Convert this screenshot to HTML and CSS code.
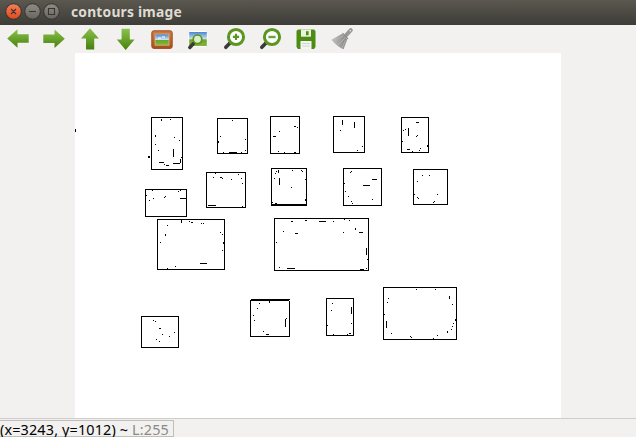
FILE: index.html
```html
<!DOCTYPE html>
<html lang="en">
<head>
<meta charset="utf-8">
<title>contours image</title>
<link rel="stylesheet" href="styles.css">
</head>
<body>
<div class="window">
  <header class="titlebar">
    <svg class="controls" width="64" height="25" viewBox="0 0 64 25">
      <defs>
        <linearGradient id="red" x2="0" y2="1"><stop stop-color="#f58059"/><stop offset="1" stop-color="#df4a1c"/></linearGradient>
        <linearGradient id="gray" x2="0" y2="1"><stop stop-color="#8f8d86"/><stop offset="1" stop-color="#66645e"/></linearGradient>
      </defs>
      <g stroke="#33322d">
        <circle cx="13.5" cy="11.5" r="7.8" fill="url(#red)"/>
        <circle cx="32.5" cy="11.5" r="7.8" fill="url(#gray)"/>
        <circle cx="51.5" cy="11.5" r="7.8" fill="url(#gray)"/>
      </g>
      <g stroke="#3a3430" stroke-width="1.1" fill="none">
        <path d="M11 9l5 5M16 9l-5 5M29 11.5h7M48.5 8.5h6v6h-6z"/>
      </g>
    </svg>
    <h1 class="title">contours image</h1>
  </header>
  <nav class="toolbar">
    <svg class="icon" viewBox="0 0 24 24">
      <defs>
        <linearGradient id="green" x2="0" y2="1"><stop stop-color="#8bc34c"/><stop offset="1" stop-color="#46800c"/></linearGradient>
        <linearGradient id="sky" x2="0" y2="1"><stop stop-color="#3f7fd0"/><stop offset=".5" stop-color="#cde3ee"/><stop offset=".55" stop-color="#6ca32c"/><stop offset="1" stop-color="#85b838"/></linearGradient>
        <linearGradient id="wood" x2="0" y2="1"><stop stop-color="#cf7c42"/><stop offset="1" stop-color="#a3501d"/></linearGradient>
        <linearGradient id="brush" x2="1"><stop stop-color="#c4c4c4"/><stop offset=".5" stop-color="#a2a2a2"/><stop offset="1" stop-color="#858585"/></linearGradient>
      </defs>
      <path d="M1.2 11.5L11.5 2.2V7.2H22.7V15.8H11.5V20.8z" fill="url(#green)"/>
    </svg>
    <svg class="icon" viewBox="0 0 24 24"><path d="M22.8 11.7L12.5 2.4V7.4H1.3V16H12.5V21z" fill="url(#green)"/></svg>
    <svg class="icon" viewBox="0 0 24 24"><path d="M12 1.2L20.9 11.5H16.2V22.5H8V11.5H3z" fill="url(#green)"/></svg>
    <svg class="icon" viewBox="0 0 24 24"><path d="M11.7 23L20.6 12.6H15.8V1.8H7.6V12.6H2.8z" fill="url(#green)"/></svg>
    <svg class="icon" viewBox="0 0 24 24">
      <rect x="1.8" y="3.8" width="20.4" height="17.6" rx="2" fill="url(#wood)" stroke="#a14e20"/>
      <rect x="5" y="7" width="14" height="11.2" fill="url(#sky)" stroke="#e2b184" stroke-width=".8"/>
      <path d="M8 11h3M12 10h3" stroke="#fff" stroke-width="1.2"/>
    </svg>
    <svg class="icon" viewBox="0 0 24 24">
      <rect x="2.7" y="4.5" width="18.6" height="15" rx="1" fill="url(#sky)" stroke="#fff"/>
      <path d="M7.5 16.5L3.8 20.5" stroke="#3a3a3a" stroke-width="3.4" stroke-linecap="round"/>
      <circle cx="11.5" cy="12.3" r="4.3" fill="#dcebc9" stroke="#5a941d" stroke-width="1.7"/>
    </svg>
    <svg class="icon" viewBox="0 0 24 24">
      <path d="M8.5 15.5L3.8 20.3" stroke="#3b3b3b" stroke-width="3.6" stroke-linecap="round"/>
      <circle cx="14" cy="10" r="7.6" fill="#fff" stroke="#5b9620" stroke-width="3"/>
      <path d="M10.9 9.9h6.2M14 6.8v6.2" stroke="#5b9620" stroke-width="2.2"/>
    </svg>
    <svg class="icon" viewBox="0 0 24 24">
      <path d="M8.5 15.5L3.8 20.3" stroke="#3b3b3b" stroke-width="3.6" stroke-linecap="round"/>
      <circle cx="14" cy="10" r="7.6" fill="#fff" stroke="#5b9620" stroke-width="3"/>
      <path d="M10.4 10h7.2" stroke="#6ca334" stroke-width="2.4"/>
    </svg>
    <svg class="icon" viewBox="0 0 24 24">
      <path d="M4 2.5H20L21.5 4V20L20 22H4L2.5 20V4z" fill="#4c8c13"/>
      <path d="M7 2.5h10v7.2H7z" fill="#e9f1df"/>
      <path d="M12 4.2h2.6v4H12z" fill="#4c8c13"/>
      <path d="M6.5 14h11v8h-11z" fill="#f5f5f5"/>
      <path d="M8 16.5h8M8 19h8" stroke="#d0d5cb"/>
    </svg>
    <svg class="icon" viewBox="0 0 24 24">
      <path d="M16.2 8.2L20.8 3.2" stroke="#989898" stroke-width="4" stroke-linecap="round"/>
      <path d="M12.2 6.8L17.3 12.3L13.5 22.2Q7 19.5 1.3 12.7z" fill="url(#brush)"/>
      <path d="M4 13.5L13 9M8 18L15 11M12 21L16 12.5" stroke="#b9b9b9" stroke-width=".8"/>
      <path d="M12.5 6.2L18 11.8" stroke="#888" stroke-width="1.2"/>
      <circle cx="20.3" cy="3.7" r=".8" fill="#eee"/>
    </svg>
  </nav>
  <main class="viewer">
    <svg class="canvas" width="486" height="365" viewBox="75 53 486 365" shape-rendering="crispEdges" fill="none" stroke="#000">
      <g transform="translate(.5 .5)">
        <rect x="151" y="117" width="31" height="52"/>
        <rect x="217" y="118" width="30" height="35"/>
        <rect x="206" y="172" width="39" height="35"/>
        <rect x="145" y="189" width="41" height="27"/>
        <rect x="270" y="116" width="29" height="37"/>
        <rect x="333" y="116" width="31" height="36"/>
        <rect x="271" y="168" width="35" height="37"/>
        <rect x="343" y="168" width="38" height="37"/>
        <rect x="401" y="117" width="27" height="35"/>
        <rect x="413" y="169" width="34" height="35"/>
        <rect x="157" y="219" width="67" height="50"/>
        <rect x="274" y="218" width="94" height="52"/>
        <rect x="383" y="287" width="73" height="52"/>
        <rect x="141" y="316" width="37" height="31"/>
        <path d="M250 299H289M289 300V336H250V299"/>
        <rect x="326" y="298" width="27" height="37"/>
      </g>
      <path transform="translate(0 .5)" d="M170 119h1M174 137h1M179 140h1M155 144h1M158 150h1M159 162h5M164 164h1M166 165h3M173 163h7M181 157h1M148 156h2M148 157h2
        M232 120h1M220 136h1M245 139h1M245 150h1M241 152h1M223 152h1M229 152h8
        M215 173h1M213 177h1M220 177h2M222 178h1M231 179h1M238 174h1M241 178h1M242 183h1M242 206h1M208 205h8
        M152 190h1M146 195h1M149 200h1M153 198h1M164 197h1M165 196h1M178 191h1M180 190h1M180 198h6
        M294 126h2M297 127h1M279 131h1M273 136h3M278 151h1M284 152h1M294 152h2
        M340 130h1M362 146h1M357 150h1
        M276 171h1M275 173h1M292 170h1M301 170h1M302 171h1M274 178h1M305 179h1M291 187h1M272 202h1M275 203h2M271 204h36
        M351 171h1M350 172h1M344 183h1M345 191h1M348 196h1M351 201h1M352 203h1M372 179h5M363 185h7M372 199h1
        M416 122h3M405 129h1M403 130h1M417 135h1M416 136h1M402 141h1M420 148h1M419 150h1M407 149h3M412 151h1
        M422 175h1M429 175h1M417 181h1M414 194h1M417 197h1M418 198h1M437 194h1M434 201h1M433 202h1
        M189 221h1M191 222h2M201 223h1M203 223h1M167 225h1M160 242h1M220 232h1M222 234h1M222 250h1M200 263h7M175 266h1M167 268h1
        M291 221h2M305 220h2M319 221h7M333 221h1M344 219h1M349 220h1M283 231h1M295 233h3M343 232h1M359 232h4M276 242h1M367 259h1M279 267h1M287 268h8M360 269h4M366 268h1
        M416 289h1M435 289h1M388 298h1M387 302h1M384 314h1M391 333h1M410 336h1M411 337h1M437 335h1M433 338h1M452 304h1M453 323h1M452 326h1M451 329h1
        M153 320h1M155 321h1M159 328h2M162 334h1M174 332h1M169 336h1M156 339h1M159 341h1
        M250 300h39M259 303h1M257 308h1M253 315h1M254 320h1M286 318h1M263 331h1M266 334h3
        M332 303h1M331 310h1M351 323h1M327 325h1M333 334h1M347 334h1M349 333h2"/>
      <path transform="translate(.5 0)" d="M75 129v3M161 119v2M155 135v2M173 149v8M180 159v4M218 141v2M342 120v5M354 122v6M278 170v3M279 178v7M305 199v2M408 128v8M427 145v2
        M181 220v3M165 234v2M223 242v2M355 228v2M366 248v7M386 321v7M449 296v3M455 319v2M447 331v2M269 301v2M285 319v8M351 307v7"/>
    </svg>
  </main>
  <footer class="statusbar">
    <div class="status"><span class="coords">(x=3243, y=1012) ~ </span><span class="level">L:255</span></div>
  </footer>
</div>
</body>
</html>
```
FILE: styles.css
```css
body {
  margin: 0;
  font-family: "Noto Sans", "Open Sans", sans-serif;
}

.window {
  display: flex;
  flex-direction: column;
  width: 636px;
  height: 437px;
  overflow: hidden;
  background: #f2f1f0;
}

.titlebar {
  display: flex;
  align-items: center;
  flex: none;
  height: 25px;
  background: linear-gradient(#5a584f, #3d3c37);
}

.controls {
  flex: none;
}

.title {
  margin: 0 0 1px 7px;
  font-size: 13.8px;
  line-height: 22px;
  font-weight: 700;
  letter-spacing: 0.22px;
  white-space: pre;
  color: #dfdbd2;
}

.toolbar {
  display: flex;
  flex: none;
  gap: 12px;
  height: 28px;
  padding-left: 6px;
}

.icon {
  width: 24px;
  height: 24px;
  margin-top: 2px;
}

.viewer {
  flex: none;
  height: 365px;
  padding-left: 75px;
}

.canvas {
  display: block;
  background: #fff;
}

.statusbar {
  flex: none;
  height: 19px;
  box-sizing: border-box;
  border-top: 1px solid #cfcdcb;
}

.status {
  box-sizing: border-box;
  width: 174px;
  height: 17px;
  margin-top: 1px;
  border: solid #c0bebb;
  border-width: 1px 1px 1px 0;
  font-size: 14.4px;
  line-height: 17px;
  letter-spacing: 0.15px;
  white-space: pre;
  color: #000;
}

.level {
  color: #8b8987;
}
```
